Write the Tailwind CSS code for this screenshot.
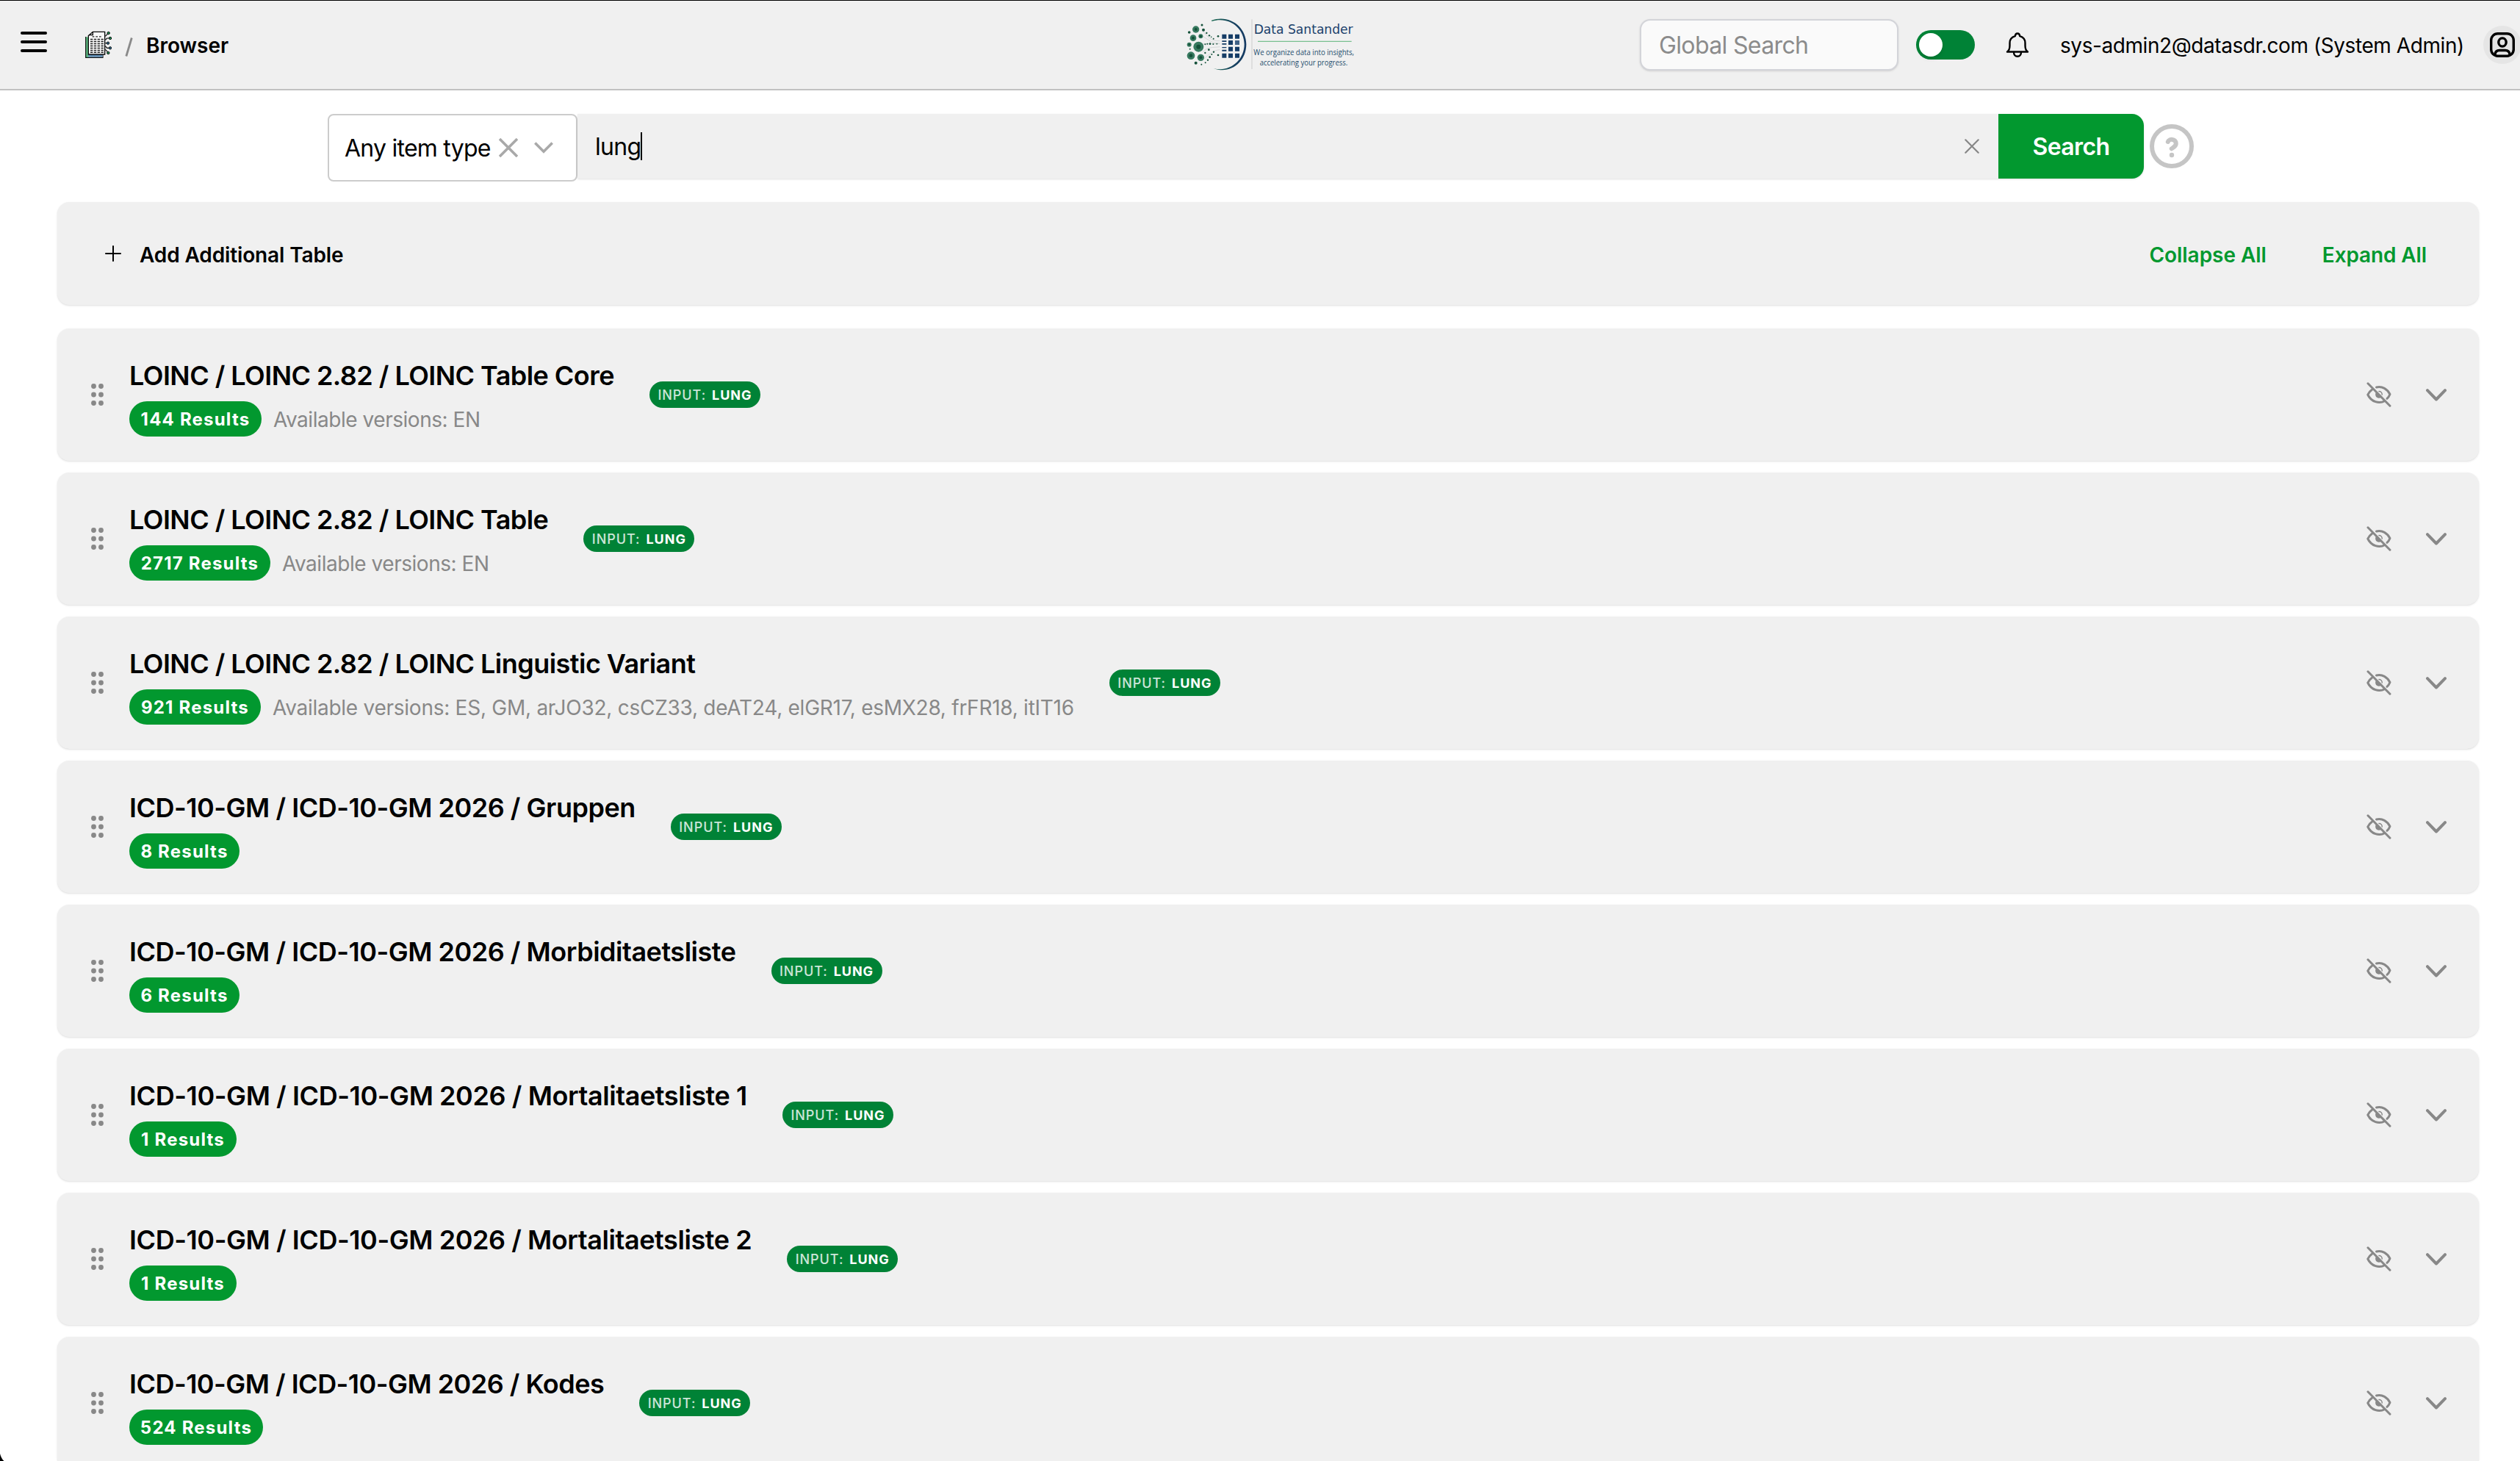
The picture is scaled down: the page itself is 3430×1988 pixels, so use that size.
<!DOCTYPE html>
<html lang="en">
<head>
  <meta charset="UTF-8" />
  <meta name="viewport" content="width=device-width, initial-scale=1.0" />
  <title>Browser - Data Santander</title>
  <script src="https://cdn.jsdelivr.net/npm/@tailwindcss/browser@4"></script>
</head>
<body class="h-[1988px] overflow-hidden bg-white text-black font-[Inter,'Liberation_Sans',sans-serif] antialiased">

  <!-- Header -->
  <header class="grid h-[123px] grid-cols-[1610px_622px_1fr] items-center border-t border-b-2 border-t-black border-b-[#c1c1c1] bg-[#f0f0f0]">
    <div class="flex items-center pl-7">
      <button class="flex h-7 w-9 -translate-y-1 flex-col justify-between">
        <span class="h-1 w-full rounded-full bg-black"></span>
        <span class="h-1 w-full rounded-full bg-black"></span>
        <span class="h-1 w-full rounded-full bg-black"></span>
      </button>
      <!-- document icon -->
      <svg class="ml-[52px] h-[37px] w-9 -translate-y-px" viewBox="348 124 108 111">
        <path d="M350 148V233H361V150Z" fill="#5bb97f" />
        <path d="M350 148V233H420V222" fill="none" stroke="#111" stroke-width="3.5" />
        <path d="M354 221H419V231H354Z" fill="#3a6f9c" />
        <path d="M354 221H361V231H354Z" fill="#5bb97f" />
        <path d="M362 226.500H418" stroke="#d5e3ee" stroke-width="3" stroke-dasharray="3 3" />
        <path d="M379 128H428V220H361V144Z" fill="#f8f8f8" stroke="#0a0a0a" stroke-width="4" />
        <path d="M379 128V141H364" fill="none" stroke="#0a0a0a" stroke-width="4" />
        <path d="M377 147.500H415" stroke="#222" stroke-width="4" stroke-dasharray="8 6" />
        <path d="M369 158.500H424M369 167.500H424M369 176.500H424M369 185.500H424M369 194.500H424M369 203.500H424M369 211.500H424" stroke="#222" stroke-width="4.500" stroke-dasharray="10 4.500" />
        <path d="M430 146L441 135M430 161L437 154H447M430 174H437M430 186L437 194H447M430 200L442 212" fill="none" stroke="#0a0a0a" stroke-width="3.500" />
        <g fill="#1e9a5a" stroke="#0a0a0a" stroke-width="3">
          <circle cx="443" cy="133" r="5" /><circle cx="450" cy="154" r="5" /><circle cx="442" cy="214" r="5" />
          <circle cx="441" cy="174" r="5" fill="#2e6d94" /><circle cx="450" cy="194" r="5" fill="#2e6d94" />
        </g>
      </svg>
      <svg class="ml-[18px] h-[26px] w-[11px] translate-y-[3px]" viewBox="0 0 11 26" stroke="#8a8a8a" stroke-width="2.800"><path d="M1.800 25.500L9.300.5" /></svg>
      <span class="ml-[18px] mt-0.5 text-[28px] font-semibold leading-9">Browser</span>
    </div>

    <!-- Logo -->
    <svg class="h-[86px] w-[240px] overflow-visible" viewBox="90 55 720 258">
      <defs>
        <linearGradient id="arc" x1="0" y1="0" x2="1" y2="0">
          <stop offset="0" stop-color="#1c6b52" />
          <stop offset=".6" stop-color="#16425f" />
          <stop offset="1" stop-color="#153a63" />
        </linearGradient>
      </defs>
      <path d="M207 84C280 58 349 110 349 182C349 256 282 306 215 280C278 298 341 249 341 182C341 116 279 66 208 88Z" fill="url(#arc)" />
      <g fill="none" stroke="#cfd2d2" stroke-width="2.500">
        <path d="M172 128C190 150 205 170 241 168M172 150C190 160 210 180 241 178M172 214C190 190 215 196 241 192M160 180H241M178 240C200 220 215 206 241 204" />
      </g>
      <g fill="#37795f">
        <circle cx="143" cy="121" r="14" /><circle cx="132" cy="156" r="13" /><circle cx="163" cy="149" r="9" />
        <circle cx="154" cy="192" r="21" /><circle cx="116" cy="183" r="9" /><circle cx="123" cy="228" r="16" />
        <circle cx="163" cy="236" r="14" />
      </g>
      <g fill="#145039">
        <circle cx="143" cy="121" r="6" /><circle cx="132" cy="156" r="6" /><circle cx="163" cy="149" r="5" />
        <circle cx="154" cy="192" r="9" /><circle cx="116" cy="183" r="4" /><circle cx="123" cy="228" r="7" /><circle cx="163" cy="236" r="6" />
        <circle cx="168" cy="103" r="4.500" /><circle cx="116" cy="133" r="5.500" /><circle cx="174" cy="123" r="6" /><circle cx="187" cy="136" r="3.500" />
        <circle cx="198" cy="146" r="3.500" /><circle cx="206" cy="152" r="2.500" /><circle cx="215" cy="159" r="3" /><circle cx="234" cy="149" r="4" />
        <circle cx="181" cy="182" r="3" /><circle cx="190" cy="180" r="3" /><circle cx="201" cy="180" r="4" /><circle cx="214" cy="181" r="3" /><circle cx="229" cy="180" r="2.500" />
        <circle cx="119" cy="201" r="3" /><circle cx="196" cy="204" r="4" /><circle cx="181" cy="217" r="3.500" /><circle cx="216" cy="213" r="3.500" />
        <circle cx="208" cy="223" r="3" /><circle cx="200" cy="234" r="4" /><circle cx="192" cy="246" r="3.500" /><circle cx="182" cy="257" r="3" />
        <circle cx="143" cy="258" r="6" /><circle cx="166" cy="264" r="3" /><circle cx="234" cy="226" r="4" />
      </g>
      <g fill="#153c66">
        <path d="M250 141h18v18h-18zM276 141h18v18h-18zM303 141h18v18h-18zM276 166h18v18h-18zM276 192h18v18h-18zM303 192h18v18h-18zM250 219h18v18h-18zM276 219h18v18h-18zM303 219h18v18h-18z" />
        <path d="M250 167h18v5h-18zM250 178h18v5h-18zM250 193h18v4h-18zM250 204h18v6h-18z" />
        <path d="M303 166h18v18h-18z" fill="#3f6186" />
      </g>
      <path d="M372 80V283" stroke="#cbcbcb" stroke-width="3" />
      <path d="M396 170H779" stroke="#79c08f" stroke-width="3.500" />
      <text x="380" y="138" font-family="DejaVu Sans" font-size="51" fill="#1b416b" textLength="405" lengthAdjust="spacingAndGlyphs">Data Santander</text>
      <text x="379" y="225" font-family="Open Sans" font-size="35" fill="#234c6c" textLength="410" lengthAdjust="spacingAndGlyphs">We organize data into insights,</text>
      <text x="404" y="269" font-family="Open Sans" font-size="35" fill="#234c6c" textLength="359" lengthAdjust="spacingAndGlyphs">accelerating your progress.</text>
    </svg>

    <div class="flex items-center">
      <div class="flex h-[70px] w-[352px] shrink-0 items-center rounded-[14px] border-2 border-[#d3d4d9] bg-[#fafafa] pl-6 pt-0.5 text-[32px] tracking-[-0.64px] text-[#8b8b8b] shadow-sm">Global Search</div>
      <div class="ml-6 flex h-10 w-20 shrink-0 items-center rounded-full bg-[#008236] pl-1">
        <span class="size-8 rounded-full bg-white shadow-md"></span>
      </div>
      <svg class="ml-[42px] h-[34px] w-8 shrink-0" viewBox="0 0 32 34" fill="none" stroke="#000" stroke-width="2.400" stroke-linecap="round" stroke-linejoin="round">
        <path d="M2 26.500H30C27 24.500 26.500 22 26.500 18V14.500C26.500 9.500 23.500 6.500 19.200 5.200C19 2.800 18 1.500 16 1.500S13 2.800 12.800 5.200C8.500 6.500 5.500 9.500 5.500 14.500V18C5.500 22 5 24.500 2 26.500Z" />
        <path d="M11 27C11 30.500 13 32.800 16 32.800S21 30.500 21 27" />
      </svg>
      <span class="ml-[42px] mt-0.5 whitespace-nowrap text-[28px] leading-9 tracking-[-0.43px]">sys-admin2@datasdr.com (System Admin)</span>
      <div class="ml-[26px] flex size-[52px] shrink-0 items-center justify-center rounded-full bg-[#e5e5e5]">
        <svg class="h-[34px] w-[34px]" viewBox="0 0 34 34" fill="none" stroke="#000" stroke-width="3.400">
          <rect x="1.700" y="1.700" width="30.600" height="30.600" rx="9" />
          <ellipse cx="17" cy="13.500" rx="5.200" ry="5.600" />
          <path d="M7 30C7.500 25.800 10 24.500 13 24.500H21C24 24.500 26.500 25.800 27 30" />
        </svg>
      </div>
    </div>
  </header>

  <!-- Search row -->
  <div class="flex items-start pl-[446px] pt-8">
    <div class="flex h-[92px] w-[340px] items-center rounded-lg border-2 border-[#ccc] bg-white pl-[21px]">
      <span class="mt-0.5 w-[210px] whitespace-nowrap text-[32px] tracking-[-0.75px]">Any item type</span>
      <svg class="size-[26px]" viewBox="0 0 26 26" stroke="#a9a9a9" stroke-width="3.600"><path d="M1 1L25 25M25 1L1 25" /></svg>
      <svg class="ml-[22px] h-4 w-[26px]" viewBox="0 0 26 16" fill="none" stroke="#a9a9a9" stroke-width="3.600"><path d="M1.300 1.500L13 13.200L24.700 1.500" /></svg>
    </div>
    <div class="flex h-[88px] w-[2132px] rounded-r-2xl shadow">
      <div class="flex flex-1 items-center bg-[#f0f0f0] pl-6">
        <span class="mt-0.5 text-[32px] leading-10 tracking-[-0.69px]">lung</span>
        <span class="h-[38px] w-0.5 bg-black"></span>
        <svg class="ml-auto mr-[26px] size-5" viewBox="0 0 20 20" stroke="#868686" stroke-width="2.200" stroke-linecap="round"><path d="M1.300 1.300L18.700 18.700M18.700 1.300L1.300 18.700" /></svg>
      </div>
      <button class="w-[198px] rounded-r-2xl bg-[#02982f] pt-0.5 text-[32px] font-semibold tracking-[-0.61px] text-white">Search</button>
    </div>
    <svg class="ml-2 mt-[14px] size-[60px]" viewBox="0 0 60 60" fill="none" stroke="#c5c5c5" stroke-width="6">
      <circle cx="30" cy="30" r="27" />
      <path d="M24.800 24C26.300 19.500 35.800 19.500 35.800 26.200C35.800 30.500 31 32 29.800 33.300" stroke-linecap="round" />
      <circle cx="30" cy="42" r="3.200" fill="#c5c5c5" stroke="none" />
    </svg>
  </div>

  <main class="pl-[78px] pr-14 pt-7">
    <!-- Toolbar -->
    <div class="flex h-[140px] items-center rounded-2xl bg-[#f0f0f0] pl-[65px] pr-[71px] text-[28px] font-semibold shadow-sm">
      <svg class="size-[22px]" viewBox="0 0 22 22" stroke="#000" stroke-width="2" stroke-linecap="round"><path d="M11 1V21M1 11H21" /></svg>
      <span class="ml-[25px] mt-[3px] tracking-[-0.12px]">Add Additional Table</span>
      <span class="ml-auto mt-[3px] tracking-[-0.05px] text-[#02982f]">Collapse All</span>
      <span class="ml-[76px] mt-[3px] tracking-[-0.12px] text-[#02982f]">Expand All</span>
    </div>

    <div id="tables" class="mt-8 flex flex-col gap-4"></div>
  </main>

  <!-- rounded window corner -->
  <svg class="absolute bottom-0 left-0 h-[10px] w-[6px]" viewBox="0 0 6 10"><path d="M0 0C1 4 3 8 5.500 10H0Z" fill="#000" /></svg>

  <script>
    const loinc = 'tracking-[-0.54px]';
    const icd = 'tracking-[-0.48px]';
    const tables = [
      { title: 'LOINC / LOINC 2.82 / LOINC Table Core', track: loinc, results: 144, pill: 'w-[180px]', versions: 'EN', vtrack: 'tracking-[-0.46px]' },
      { title: 'LOINC / LOINC 2.82 / LOINC Table', track: loinc, results: 2717, pill: 'w-[192px]', versions: 'EN', vtrack: 'tracking-[-0.46px]' },
      { title: 'LOINC / LOINC 2.82 / LOINC Linguistic Variant', track: loinc, results: 921, pill: 'w-[179px]', versions: 'ES, GM, arJO32, csCZ33, deAT24, elGR17, esMX28, frFR18, itIT16', vtrack: 'tracking-[-0.26px]' },
      { title: 'ICD-10-GM / ICD-10-GM 2026 / Gruppen', track: icd, results: 8, pill: 'w-[150px]' },
      { title: 'ICD-10-GM / ICD-10-GM 2026 / Morbiditaetsliste', track: icd, results: 6, pill: 'w-[150px]' },
      { title: 'ICD-10-GM / ICD-10-GM 2026 / Mortalitaetsliste 1', track: 'tracking-[-0.41px]', results: 1, pill: 'w-[146px]' },
      { title: 'ICD-10-GM / ICD-10-GM 2026 / Mortalitaetsliste 2', track: 'tracking-[-0.43px]', results: 1, pill: 'w-[146px]' },
      { title: 'ICD-10-GM / ICD-10-GM 2026 / Kodes', track: 'tracking-[-0.52px]', results: 524, pill: 'w-[182px]' },
    ];

    document.getElementById('tables').innerHTML = tables.map(t => `
      <div class="flex h-[180px] items-center rounded-2xl bg-[#f0f0f0] pl-[46px] pr-11 shadow-sm">
        <svg class="h-[30px] w-[17px]" viewBox="0 0 17 30" fill="#888">
          <circle cx="3.500" cy="3.500" r="3.400" /><circle cx="13.500" cy="3.500" r="3.400" />
          <circle cx="3.500" cy="15" r="3.400" /><circle cx="13.500" cy="15" r="3.400" />
          <circle cx="3.500" cy="26.500" r="3.400" /><circle cx="13.500" cy="26.500" r="3.400" />
        </svg>
        <div class="ml-[35px] mt-2 flex flex-col items-start">
          <h2 class="h-11 whitespace-nowrap text-[36px] font-semibold leading-[44px] ${t.track}">${t.title}</h2>
          <div class="mt-[13px] flex items-center">
            <span class="${t.pill} h-12 whitespace-nowrap rounded-full bg-[#02982f] text-center text-[24px] font-bold leading-[49px] tracking-[1.2px] text-white">${t.results} Results</span>
            ${t.versions ? `<span class="ml-4 mt-0.5 whitespace-nowrap text-[28px] leading-9 ${t.vtrack} text-[#888]">Available versions: ${t.versions}</span>` : ''}
          </div>
        </div>
        <span class="ml-12 flex h-9 w-[151px] items-center justify-center gap-2 whitespace-nowrap rounded-full bg-[#008236] text-[18px] font-bold tracking-[0.95px] text-white"><span class="font-medium text-white/80">INPUT:</span>LUNG</span>
        <svg class="ml-auto h-[34px] w-[34px]" viewBox="0 0 34 34" fill="none" stroke="#888" stroke-width="3" stroke-linecap="round" stroke-linejoin="round">
          <path d="M13.500 7C21.500 5 28.500 9.500 32 16.500C31 19 29.800 20.800 28 22.300" />
          <path d="M7.500 10.200C5 12 3 14.200 1.800 17C6.500 27 17.500 30 25 25.500" />
          <path d="M12.800 14C10.500 18.500 14.500 23.500 19.800 21Z" fill="#888" stroke="none" />
          <path d="M17 12.600C19.500 12.600 21.300 14.500 21.300 17" stroke-width="1.500" />
          <path d="M2 1.800L32 32.200" />
        </svg>
        <svg class="ml-[47px] h-[17px] w-7" viewBox="0 0 28 17" fill="none" stroke="#888" stroke-width="4" stroke-linecap="round" stroke-linejoin="round"><path d="M2 2.200L14 14.500L26 2.200" /></svg>
      </div>`).join('');
  </script>
</body>
</html>
